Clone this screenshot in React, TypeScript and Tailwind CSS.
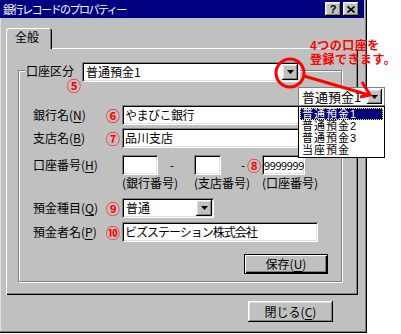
import React from 'react';

const raised =
  'bg-[#c0c0c0] shadow-[inset_-1px_-1px_0_#000000,inset_1px_1px_0_#ffffff,inset_-2px_-2px_0_#808080,inset_2px_2px_0_#dfdfdf]';
const sunken =
  'bg-white shadow-[inset_1px_1px_0_#808080,inset_-1px_-1px_0_#ffffff,inset_2px_2px_0_#000000,inset_-2px_-2px_0_#dfdfdf]';

function DownArrow() {
  return (
    <svg width="7" height="4" viewBox="0 0 7 4">
      <path d="M0 0h7L3.5 4z" fill="#000" />
    </svg>
  );
}

function Combo({ value, className }: { value: string; className: string }) {
  return (
    <div className={`${sunken} flex items-center h-[20px] pl-[4px] pr-[2px] ${className}`}>
      <span className="flex-1">{value}</span>
      <div className={`${raised} w-[16px] h-[16px] flex items-center justify-center`}>
        <DownArrow />
      </div>
    </div>
  );
}

function Field({ value, className }: { value?: string; className: string }) {
  return <div className={`${sunken} h-[20px] flex items-center pl-[3px] ${className}`}>{value}</div>;
}

function Label({ text, k }: { text: string; k: string }) {
  return (
    <span className="w-[73px] shrink-0">
      {text}(<span className="underline underline-offset-[2px]">{k}</span>)
    </span>
  );
}

function Num({ n }: { n: string }) {
  return (
    <span className="w-[12px] mr-[4px] shrink-0 text-center text-[14px] leading-[14px] font-bold text-[#ff0000]">
      {n}
    </span>
  );
}

export default function App() {
  return (
    <div className="relative w-[401px] h-[334px] bg-white overflow-hidden text-[12px] leading-[12px] text-black font-['Noto_Sans_CJK_JP',sans-serif]">
      <div className="flex flex-col w-[367px] h-[333px] bg-[#c0c0c0] shadow-[inset_-1px_-1px_0_#000000,inset_-2px_-2px_0_#808080,inset_1px_0_0_#dfdfdf]">
        {/* title bar */}
        <div className="flex items-center h-[18px] mr-[3px] bg-[#000080] pl-[3px] pr-[5px]">
          <span className="text-white text-[11px] tracking-[-1.5px]">銀行レコードのプロパティー</span>
          <div className="ml-auto flex gap-[2px]">
            <div className={`${raised} w-[16px] h-[14px] flex items-center justify-center text-[11px] font-bold font-['Liberation_Sans',sans-serif]`}>
              ?
            </div>
            <div className={`${raised} w-[16px] h-[14px] flex items-center justify-center`}>
              <svg width="8" height="7" viewBox="0 0 8 7">
                <path d="M0.5 0.5L7.5 6.5M7.5 0.5L0.5 6.5" stroke="#000" strokeWidth="1.6" />
              </svg>
            </div>
          </div>
        </div>

        <div className="flex flex-col pl-[6px] pt-[10px]">
          {/* tab */}
          <div className="relative z-10 -mb-[1px] w-[46px] h-[21px] rounded-t-[3px] bg-[#c0c0c0] pl-[9px] pt-[3px] shadow-[inset_1px_1px_0_#ffffff,inset_-1px_0_0_#000000,inset_-2px_0_0_#808080]">
            全般
          </div>

          {/* tab panel */}
          <div className="w-[352px] h-[247px] pl-[12px] pt-[22px] bg-[#c0c0c0] shadow-[inset_1px_1px_0_#ffffff,inset_-1px_-1px_0_#000000,inset_-2px_-2px_0_#808080]">
            <div className="flex flex-col w-[324px] h-[212px] pl-[14px] border border-[#808080] shadow-[inset_1px_1px_0_#ffffff,1px_1px_0_#ffffff]">
              <div className="flex items-center h-[20px] -mt-[9px] -ml-[8px]">
                <span className="w-[57px] pl-[1px] bg-[#c0c0c0] font-['Liberation_Sans','Noto_Sans_CJK_JP',sans-serif]">口座区分</span>
                <Combo value="普通預金1" className="w-[218px]" />
              </div>

              <div className="flex items-center h-[20px] mt-[23px]">
                <Label text="銀行名" k="N" />
                <Num n="⑥" />
                <Field value="やまびこ銀行" className="w-[212px] tracking-[-0.5px]" />
              </div>

              <div className="flex items-center h-[20px] mt-[3px]">
                <Label text="支店名" k="B" />
                <Num n="⑦" />
                <Field value="品川支店" className="w-[212px]" />
              </div>

              <div className="flex items-center h-[20px] mt-[7px]">
                <Label text="口座番号" k="H" />
                <span className="w-[16px] shrink-0" />
                <div className="grid grid-cols-[72px_68px_auto] items-center">
                  <div className="flex items-center">
                    <Field className="w-[36px]" />
                    <span className="ml-[12px]">-</span>
                  </div>
                  <div className="flex items-center">
                    <Field className="w-[27px]" />
                    <span className="ml-[20px]">-</span>
                    <span className="ml-[2px] w-[12px] text-center text-[14px] leading-[14px] font-bold text-[#ff0000]">⑧</span>
                  </div>
                  <Field value="9999999" className="w-[43px] !pl-[2px] text-[11px] tracking-[-0.4px]" />
                </div>
              </div>

              <div className="flex items-center h-[12px] mt-[2px]">
                <span className="w-[89px] shrink-0" />
                <div className="grid grid-cols-[72px_68px_auto]">
                  <span>(銀行番号)</span>
                  <span>(支店番号)</span>
                  <span>(口座番号)</span>
                </div>
              </div>

              <div className="flex items-center h-[20px] mt-[9px]">
                <Label text="預金種目" k="Q" />
                <Num n="⑨" />
                <Combo value="普通" className="w-[92px]" />
              </div>

              <div className="flex items-center h-[20px] mt-[4px]">
                <Label text="預金者名" k="P" />
                <Num n="⑩" />
                <Field value="ビズステーション株式会社" className="w-[196px] tracking-[-1px]" />
              </div>

              <div className="self-end mr-[13px] mt-[12px] w-[84px] h-[20px] flex items-center justify-center border border-black shadow-[inset_1px_1px_0_#ffffff,inset_-1px_-1px_0_#000000,inset_-2px_-2px_0_#808080]">
                保存(<span className="underline underline-offset-[2px]">U</span>)
              </div>
            </div>
          </div>

          <div className={`${raised} ml-[242px] mt-[6px] w-[85px] h-[21px] flex items-center justify-center`}>
            閉じる(<span className="underline underline-offset-[2px]">C</span>)
          </div>
        </div>
      </div>

      {/* annotations */}
      <span className="absolute left-[67px] top-[79px] w-[13px] text-center text-[14px] leading-[14px] font-bold text-[#ff0000] font-['Liberation_Sans','Noto_Sans_CJK_JP',sans-serif]">⑤</span>

      <div className="absolute left-[310px] top-[40px] flex flex-col text-[12px] leading-[13.5px] tracking-[0.5px] font-bold text-[#ff0000] font-['Liberation_Sans','Noto_Sans_CJK_JP',sans-serif]">
        <span>4つの口座を</span>
        <span>登録できます。</span>
      </div>

      <div className="absolute left-[298px] top-[87px] w-[87px] flex flex-col">
        <div className="flex items-center h-[19px] bg-white border border-[#808080] pl-[3px] pr-[2px]">
          <span className="flex-1 text-[13px]">普通預金1</span>
          <div className={`${raised} w-[15px] h-[15px] flex items-center justify-center`}>
            <DownArrow />
          </div>
        </div>
        <div className="flex flex-col bg-white border border-black p-[1px] text-[11px] leading-[12px] tracking-[1px] font-['Liberation_Sans','Noto_Sans_CJK_JP',sans-serif]">
          <span className="h-[12px] pl-[2px] bg-[#000080] text-white outline outline-1 outline-dotted outline-[#ffff00] -outline-offset-1">普通預金1</span>
          <span className="h-[12px] pl-[2px]">普通預金2</span>
          <span className="h-[12px] pl-[2px]">普通預金3</span>
          <span className="h-[12px] pl-[2px]">当座預金</span>
        </div>
      </div>

      <svg className="absolute inset-0 pointer-events-none" width="401" height="334">
        <circle cx="290" cy="73" r="14" fill="none" stroke="#ff0000" strokeWidth="3" />
        <line x1="304" y1="76" x2="369" y2="95" stroke="#ff0000" strokeWidth="3" />
        <polyline points="362,82 370,95 360,97" fill="none" stroke="#ff0000" strokeWidth="3" />
      </svg>
    </div>
  );
}
